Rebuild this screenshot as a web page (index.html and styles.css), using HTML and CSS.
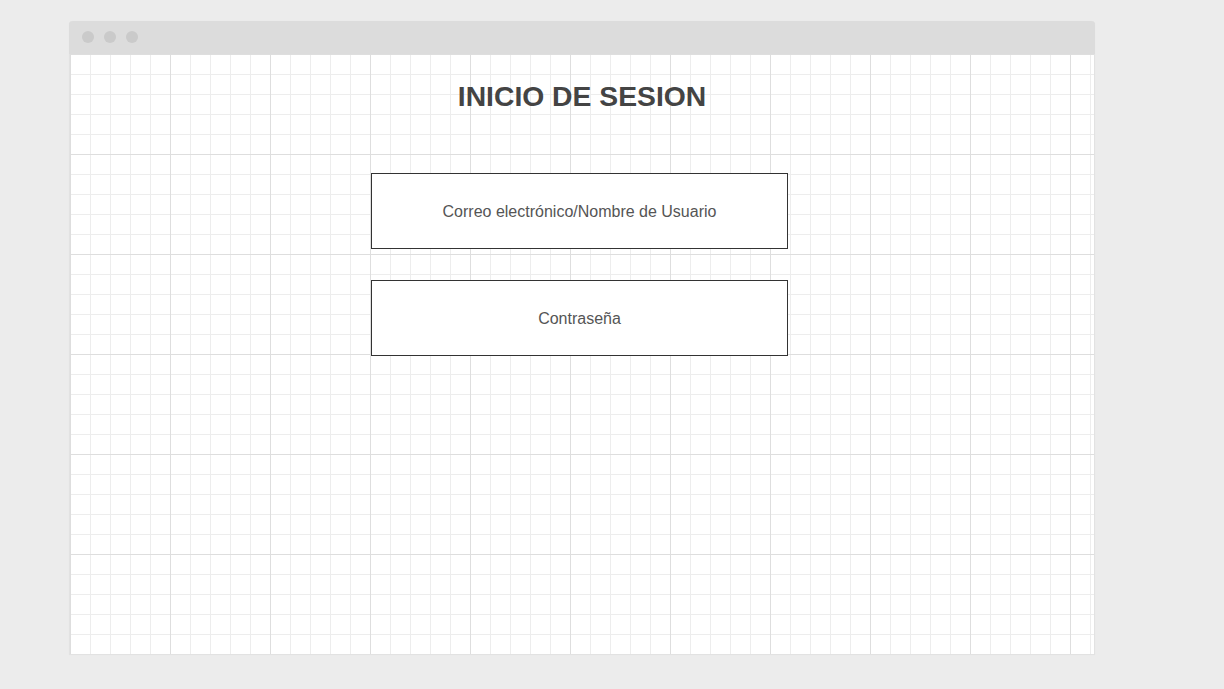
FILE: index.html
```html
<!DOCTYPE html>
<html lang="es">
<head>
<meta charset="utf-8">
<title>Inicio de sesion</title>
<link rel="stylesheet" href="styles.css">
</head>
<body>
<div class="window">
  <div class="titlebar">
    <span class="dot"></span>
    <span class="dot"></span>
    <span class="dot"></span>
  </div>
  <div class="canvas">
    <h1 class="title">INICIO DE SESION</h1>
    <div class="form">
      <div class="field">Correo electrónico/Nombre de Usuario</div>
      <div class="field">Contraseña</div>
    </div>
  </div>
</div>
</body>
</html>
```

FILE: styles.css
```css
html, body {
  margin: 0;
  padding: 0;
}
body {
  background: #ececec;
  font-family: "Liberation Sans", Arial, sans-serif;
  width: 1224px;
  height: 689px;
  overflow: hidden;
}
.window {
  margin: 21px 0 0 69px;
  width: 1024px;
  border: 1px solid #e2e2e2;
  border-top: 0;
  border-radius: 4px 4px 0 0;
  box-shadow: 0 0 1px rgba(0,0,0,0.05);
}
.titlebar {
  height: 33px;
  background: #dcdcdc;
  border-radius: 4px 4px 0 0;
  margin: 0 -1px;
  display: flex;
  align-items: center;
  gap: 10px;
  padding-left: 13px;
  padding-bottom: 2px;
  box-sizing: border-box;
}
.dot {
  width: 12px;
  height: 12px;
  border-radius: 50%;
  background: #cacaca;
}
.canvas {
  height: 600px;
  background-color: #ffffff;
  background-image:
    linear-gradient(to right, #dedede 1px, transparent 1px),
    linear-gradient(to bottom, #dedede 1px, transparent 1px),
    linear-gradient(to right, #ededed 1px, transparent 1px),
    linear-gradient(to bottom, #ededed 1px, transparent 1px);
  background-size: 100px 100px, 100px 100px, 20px 20px, 20px 20px;
  display: flex;
  flex-direction: column;
  align-items: flex-start;
  padding-top: 26px;
  box-sizing: border-box;
}
.title {
  align-self: stretch;
  margin: 0;
  text-align: center;
  font-size: 28.3px;
  line-height: 32px;
  font-weight: bold;
  color: #444444;
}
.form {
  margin: 61px 0 0 301px;
  display: flex;
  flex-direction: column;
  gap: 31px;
}
.field {
  width: 415px;
  height: 73px;
  padding-top: 1px;
  border: 1px solid #333333;
  background: #ffffff;
  display: flex;
  align-items: center;
  justify-content: center;
  box-sizing: content-box;
  font-size: 16px;
  color: #555555;
}
```
